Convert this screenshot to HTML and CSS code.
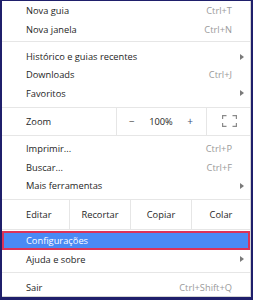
FILE: index.html
```html
<!DOCTYPE html>
<html lang="pt">
<head>
  <meta charset="UTF-8">
  <title>Menu</title>
  <link rel="stylesheet" href="styles.css">
</head>
<body>

  <div class="frame">
    <div class="menu">

      <div class="item first"><span class="label">Nova guia</span><span class="shortcut">Ctrl+T</span><span class="end"></span></div>
      <div class="item"><span class="label">Nova janela</span><span class="shortcut">Ctrl+N</span><span class="end"></span></div>

      <div class="sep"></div>

      <div class="item"><span class="label">Histórico e guias recentes</span><span class="end"><span class="arrow"></span></span></div>
      <div class="item"><span class="label">Downloads</span><span class="shortcut">Ctrl+J</span><span class="end"></span></div>
      <div class="item"><span class="label">Favoritos</span><span class="end"><span class="arrow"></span></span></div>

      <!-- Zoom -->
      <div class="btn-row zoom-row">
        <div class="cell cell-label">Zoom</div>
        <div class="cell zoom-ctl">
          <span class="zoom-btn minus">&minus;</span>
          <span class="zoom-val">100%</span>
          <span class="zoom-btn plus">+</span>
        </div>
        <div class="cell cell-full">
          <svg width="15" height="12" viewBox="0 0 15 12" fill="none" stroke="#8a8a8a" stroke-width="1.2">
            <path d="M0.6 4V0.6H4.5M10.5 0.6H14.4V4M14.4 8V11.4H10.5M4.5 11.4H0.6V8"/>
          </svg>
        </div>
      </div>

      <div class="item"><span class="label">Imprimir...</span><span class="shortcut">Ctrl+P</span><span class="end"></span></div>
      <div class="item"><span class="label">Buscar...</span><span class="shortcut">Ctrl+F</span><span class="end"></span></div>
      <div class="item"><span class="label">Mais ferramentas</span><span class="end"><span class="arrow"></span></span></div>

      <!-- Edit -->
      <div class="btn-row edit-row">
        <div class="cell cell-label">Editar</div>
        <div class="cell cell-btn">Recortar</div>
        <div class="cell cell-btn">Copiar</div>
        <div class="cell cell-btn last">Colar</div>
      </div>

      <div class="item active"><span class="label">Configurações</span><span class="end"></span></div>
      <div class="item"><span class="label">Ajuda e sobre</span><span class="end"><span class="arrow"></span></span></div>

      <div class="sep sep-last"></div>

      <div class="item"><span class="label">Sair</span><span class="shortcut">Ctrl+Shift+Q</span><span class="end"></span></div>

    </div>
  </div>

</body>
</html>
```

FILE: styles.css
```css
:root {
  --frame-color: #1f1f6b;
  --text-color: #1e1e1e;
  --muted-color: #9a9a9a;
  --line-color: #e6e6e6;
  --hover-color: #4a8af4;
  --mark-color: #dc3358;
}

html, body {
  margin: 0;
  padding: 0;
  background: #ffffff;
}

.frame {
  width: 253px;
  height: 300px;
  box-sizing: border-box;
  border-style: solid;
  border-color: var(--frame-color);
  border-width: 1px 2px 3px 2px;
  font-family: 'Open Sans', sans-serif;
  font-size: 9.3px;
  color: var(--text-color);
}

.menu {
  height: 100%;
  box-sizing: border-box;
  background: #ffffff;
  border-right: 1px solid #d4d4d4;
  border-bottom: 1px solid #d4d4d4;
  padding-top: 0.8px;
}

/* Menu rows */
.item {
  display: flex;
  align-items: center;
  height: 18.33px;
  padding: 0 6px 0 24px;
  white-space: nowrap;
}

.label {
  flex: 1;
}

.shortcut {
  color: var(--muted-color);
}

.end {
  width: 12px;
  display: flex;
  justify-content: flex-end;
}

.arrow {
  width: 0;
  height: 0;
  border-top: 3.5px solid transparent;
  border-bottom: 3.5px solid transparent;
  border-left: 4px solid #7a7a7a;
}

.sep {
  height: 1px;
  background: var(--line-color);
  margin: 3px 0 5px;
}

.sep-last {
  margin: 3px 0 5.5px;
}

/* Highlighted entry */
.item.active {
  box-sizing: border-box;
  height: 19.5px;
  margin-top: 0.6px;
  padding-left: 22px;
  background: var(--hover-color);
  color: #ffffff;
  border: 2px solid var(--mark-color);
}

/* Zoom and edit rows */
.btn-row {
  display: flex;
  border-top: 1px solid var(--line-color);
  border-bottom: 1px solid var(--line-color);
}

.zoom-row {
  height: 27px;
  margin: 4.5px 0 3.8px;
}

.edit-row {
  height: 29px;
  margin: 4.5px 0 0;
}

.cell {
  display: flex;
  align-items: center;
}

.cell-label {
  padding-left: 24px;
}

.zoom-row .cell-label {
  width: 90px;
  border-right: 1px solid var(--line-color);
}

.zoom-ctl {
  width: 90px;
  justify-content: space-between;
  padding: 0 13px 0 12px;
  box-sizing: border-box;
  border-right: 1px solid var(--line-color);
}

.zoom-btn {
  color: #555555;
  font-size: 10px;
}

.zoom-btn.plus {
  color: #3b4f7a;
}

.cell-full {
  flex: 1;
  justify-content: center;
  padding-left: 1px;
}

.edit-row .cell-label {
  width: 43px;
  border-right: 1px solid var(--line-color);
}

.cell-btn {
  width: 60px;
  justify-content: center;
  border-right: 1px solid var(--line-color);
}

.cell-btn.last {
  flex: 1;
  border-right: none;
}
```
